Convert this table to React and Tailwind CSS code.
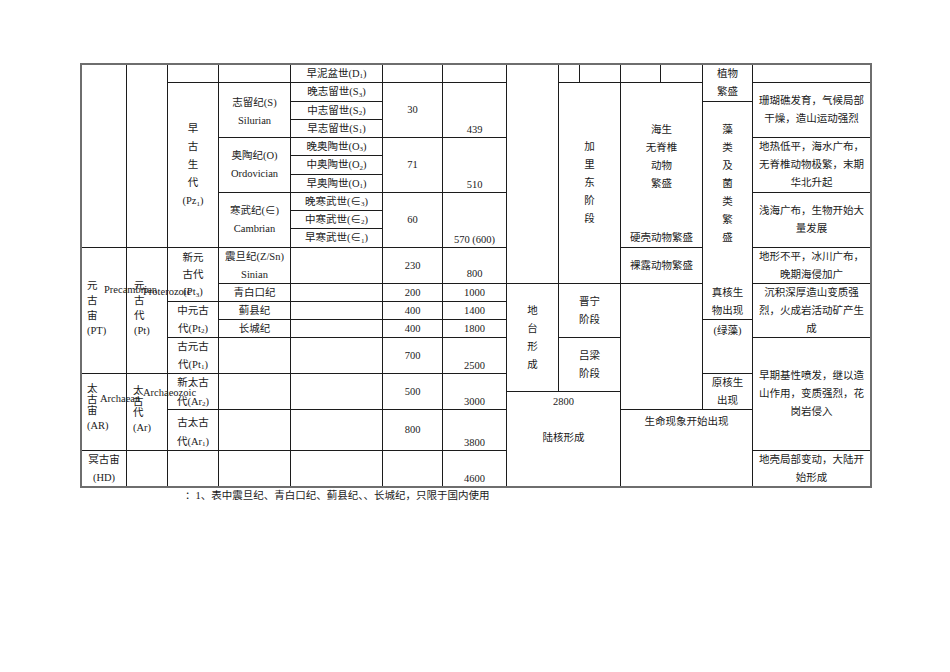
import React from "react";

function Sb({ children }) {
  return <sub className="text-[7px]">{children}</sub>;
}

function Cell({ pos, nb, nr, j = "justify-center", x = "items-center", extra = "", children }) {
  return (
    <div
      className={`${pos} ${nr ? "" : "border-r"} ${nb ? "" : "border-b"} border-[#1c1c1c] flex flex-col ${x} ${j} ${extra} text-center whitespace-nowrap`}
    >
      {children}
    </div>
  );
}

function Ls({ items }) {
  return items.map((t, i) => <div key={i}>{t === "" ? "\u00a0" : t}</div>);
}

export default function App() {
  return (
    <div className="min-h-[672px] w-[950px] bg-white pt-[63px] pl-[80px] text-[#1a1a1a] font-['Liberation_Serif','Noto_Sans_CJK_SC',serif] text-[10.5px] leading-[18px]">
      <div className="relative grid w-[792px] border-2 border-[#6e6e6e] grid-cols-[45px_41px_51px_72px_92px_60px_64px_52px_21px_41px_40px_42px_50px_117px] grid-rows-[18px_19px_18px_18px_18px_19px_18px_18px_18px_19px_36px_18px_18px_18px_36px_18px_18px_41px_35px]">
        {/* Column 1 */}
        <Cell pos="col-start-1 col-end-2 row-start-1 row-end-11" />
        <Cell pos="col-start-1 col-end-2 row-start-11 row-end-16" x="items-start" extra="pl-[5px] pb-[6px] leading-[15px]">
          <Ls items={["元", "古", "宙", "(PT)"]} />
        </Cell>
        <Cell pos="col-start-1 col-end-2 row-start-16 row-end-19" x="items-start" j="justify-start" extra="pl-[5px] pt-[9px] leading-[11px]">
          <div>太</div>
          <div>古</div>
          <div>宙</div>
          <div className="mt-[4px]">(AR)</div>
        </Cell>
        <Cell pos="col-start-1 col-end-2 row-start-19 row-end-20" nb>
          <Ls items={["冥古宙", "(HD)"]} />
        </Cell>

        {/* Column 2 */}
        <Cell pos="col-start-2 col-end-3 row-start-1 row-end-11" />
        <Cell pos="col-start-2 col-end-3 row-start-11 row-end-16" x="items-start" extra="pl-[7px] pb-[6px] leading-[15px]">
          <Ls items={["元", "古", "代", "(Pt)"]} />
        </Cell>
        <Cell pos="col-start-2 col-end-3 row-start-16 row-end-19" x="items-start" j="justify-start" extra="pl-[6px] pt-[11px] leading-[11px]">
          <div>太</div>
          <div>古</div>
          <div>代</div>
          <div className="mt-[4px]">(Ar)</div>
        </Cell>
        <Cell pos="col-start-2 col-end-3 row-start-19 row-end-20" nb />

        {/* Column 3 */}
        <Cell pos="col-start-3 col-end-4 row-start-1 row-end-2" />
        <Cell pos="col-start-3 col-end-4 row-start-2 row-end-11">
          <div>早</div>
          <div>古</div>
          <div>生</div>
          <div>代</div>
          <div>(Pz<Sb>1</Sb>)</div>
        </Cell>
        <Cell pos="col-start-3 col-end-4 row-start-11 row-end-13" extra="leading-[17px]">
          <div>新元</div>
          <div>古代</div>
          <div>(Pt<Sb>3</Sb>)</div>
        </Cell>
        <Cell pos="col-start-3 col-end-4 row-start-13 row-end-15">
          <div>中元古</div>
          <div>代(Pt<Sb>2</Sb>)</div>
        </Cell>
        <Cell pos="col-start-3 col-end-4 row-start-15 row-end-16">
          <div>古元古</div>
          <div>代(Pt<Sb>1</Sb>)</div>
        </Cell>
        <Cell pos="col-start-3 col-end-4 row-start-16 row-end-18" extra="leading-[19px]">
          <div>新太古</div>
          <div>代(Ar<Sb>2</Sb>)</div>
        </Cell>
        <Cell pos="col-start-3 col-end-4 row-start-18 row-end-19" extra="leading-[19px] pt-[3px]">
          <div>古太古</div>
          <div>代(Ar<Sb>1</Sb>)</div>
        </Cell>
        <Cell pos="col-start-3 col-end-4 row-start-19 row-end-20" nb />

        {/* Column 4 */}
        <Cell pos="col-start-4 col-end-5 row-start-1 row-end-2" />
        <Cell pos="col-start-4 col-end-5 row-start-2 row-end-5" extra="pt-[4px]">
          <Ls items={["志留纪(S)", "Silurian"]} />
        </Cell>
        <Cell pos="col-start-4 col-end-5 row-start-5 row-end-8">
          <Ls items={["奥陶纪(O)", "Ordovician"]} />
        </Cell>
        <Cell pos="col-start-4 col-end-5 row-start-8 row-end-11">
          <Ls items={["寒武纪(∈)", "Cambrian"]} />
        </Cell>
        <Cell pos="col-start-4 col-end-5 row-start-11 row-end-12">
          <Ls items={["震旦纪(Z/Sn)", "Sinian"]} />
        </Cell>
        <Cell pos="col-start-4 col-end-5 row-start-12 row-end-13">青白口纪</Cell>
        <Cell pos="col-start-4 col-end-5 row-start-13 row-end-14">蓟县纪</Cell>
        <Cell pos="col-start-4 col-end-5 row-start-14 row-end-15">长城纪</Cell>
        <Cell pos="col-start-4 col-end-5 row-start-15 row-end-16" />
        <Cell pos="col-start-4 col-end-5 row-start-16 row-end-18" />
        <Cell pos="col-start-4 col-end-5 row-start-18 row-end-19" />
        <Cell pos="col-start-4 col-end-5 row-start-19 row-end-20" nb />

        {/* Column 5 */}
        <Cell pos="col-start-5 col-end-6 row-start-1 row-end-2"><div>早泥盆世(D<Sb>1</Sb>)</div></Cell>
        <Cell pos="col-start-5 col-end-6 row-start-2 row-end-3"><div>晚志留世(S<Sb>3</Sb>)</div></Cell>
        <Cell pos="col-start-5 col-end-6 row-start-3 row-end-4"><div>中志留世(S<Sb>2</Sb>)</div></Cell>
        <Cell pos="col-start-5 col-end-6 row-start-4 row-end-5"><div>早志留世(S<Sb>1</Sb>)</div></Cell>
        <Cell pos="col-start-5 col-end-6 row-start-5 row-end-6"><div>晚奥陶世(O<Sb>3</Sb>)</div></Cell>
        <Cell pos="col-start-5 col-end-6 row-start-6 row-end-7"><div>中奥陶世(O<Sb>2</Sb>)</div></Cell>
        <Cell pos="col-start-5 col-end-6 row-start-7 row-end-8"><div>早奥陶世(O<Sb>1</Sb>)</div></Cell>
        <Cell pos="col-start-5 col-end-6 row-start-8 row-end-9"><div>晚寒武世(∈<Sb>3</Sb>)</div></Cell>
        <Cell pos="col-start-5 col-end-6 row-start-9 row-end-10"><div>中寒武世(∈<Sb>2</Sb>)</div></Cell>
        <Cell pos="col-start-5 col-end-6 row-start-10 row-end-11"><div>早寒武世(∈<Sb>1</Sb>)</div></Cell>
        <Cell pos="col-start-5 col-end-6 row-start-11 row-end-12" />
        <Cell pos="col-start-5 col-end-6 row-start-12 row-end-13" />
        <Cell pos="col-start-5 col-end-6 row-start-13 row-end-14" />
        <Cell pos="col-start-5 col-end-6 row-start-14 row-end-15" />
        <Cell pos="col-start-5 col-end-6 row-start-15 row-end-16" />
        <Cell pos="col-start-5 col-end-6 row-start-16 row-end-18" />
        <Cell pos="col-start-5 col-end-6 row-start-18 row-end-19" />
        <Cell pos="col-start-5 col-end-6 row-start-19 row-end-20" nb />

        {/* Column 6 */}
        <Cell pos="col-start-6 col-end-7 row-start-1 row-end-2" />
        <Cell pos="col-start-6 col-end-7 row-start-2 row-end-5">30</Cell>
        <Cell pos="col-start-6 col-end-7 row-start-5 row-end-8">71</Cell>
        <Cell pos="col-start-6 col-end-7 row-start-8 row-end-11">60</Cell>
        <Cell pos="col-start-6 col-end-7 row-start-11 row-end-12">230</Cell>
        <Cell pos="col-start-6 col-end-7 row-start-12 row-end-13">200</Cell>
        <Cell pos="col-start-6 col-end-7 row-start-13 row-end-14">400</Cell>
        <Cell pos="col-start-6 col-end-7 row-start-14 row-end-15">400</Cell>
        <Cell pos="col-start-6 col-end-7 row-start-15 row-end-16">700</Cell>
        <Cell pos="col-start-6 col-end-7 row-start-16 row-end-18">500</Cell>
        <Cell pos="col-start-6 col-end-7 row-start-18 row-end-19">800</Cell>
        <Cell pos="col-start-6 col-end-7 row-start-19 row-end-20" nb />

        {/* Column 7 */}
        <Cell pos="col-start-7 col-end-8 row-start-1 row-end-2" />
        <Cell pos="col-start-7 col-end-8 row-start-2 row-end-5" j="justify-end" extra="leading-[14px]">439</Cell>
        <Cell pos="col-start-7 col-end-8 row-start-5 row-end-8" j="justify-end" extra="leading-[14px]">510</Cell>
        <Cell pos="col-start-7 col-end-8 row-start-8 row-end-11" j="justify-end" extra="leading-[14px]">570 (600)</Cell>
        <Cell pos="col-start-7 col-end-8 row-start-11 row-end-12" j="justify-end" extra="leading-[14px] pb-[2px]">800</Cell>
        <Cell pos="col-start-7 col-end-8 row-start-12 row-end-13">1000</Cell>
        <Cell pos="col-start-7 col-end-8 row-start-13 row-end-14">1400</Cell>
        <Cell pos="col-start-7 col-end-8 row-start-14 row-end-15">1800</Cell>
        <Cell pos="col-start-7 col-end-8 row-start-15 row-end-16" j="justify-end" extra="leading-[14px]">2500</Cell>
        <Cell pos="col-start-7 col-end-8 row-start-16 row-end-18" j="justify-end" extra="leading-[14px]">3000</Cell>
        <Cell pos="col-start-7 col-end-8 row-start-18 row-end-19" j="justify-end" extra="leading-[14px]">3800</Cell>
        <Cell pos="col-start-7 col-end-8 row-start-19 row-end-20" nb j="justify-end" extra="leading-[14px]">4600</Cell>

        {/* Column 8 */}
        <Cell pos="col-start-8 col-end-9 row-start-1 row-end-12" />
        <Cell pos="col-start-8 col-end-9 row-start-12 row-end-17">
          <Ls items={["地", "台", "形", "成"]} />
        </Cell>
        <Cell pos="col-start-8 col-end-11 row-start-17 row-end-20" nb j="justify-start" extra="pt-[1px]">
          <Ls items={["2800", "", "陆核形成"]} />
        </Cell>

        {/* Columns 9-10 */}
        <Cell pos="col-start-9 col-end-10 row-start-1 row-end-2" />
        <Cell pos="col-start-10 col-end-11 row-start-1 row-end-2" />
        <Cell pos="col-start-9 col-end-11 row-start-2 row-end-12">
          <Ls items={["加", "里", "东", "阶", "段"]} />
        </Cell>
        <Cell pos="col-start-9 col-end-11 row-start-12 row-end-15">
          <Ls items={["晋宁", "阶段"]} />
        </Cell>
        <Cell pos="col-start-9 col-end-11 row-start-15 row-end-17">
          <Ls items={["吕梁", "阶段"]} />
        </Cell>

        {/* Columns 11-12 */}
        <Cell pos="col-start-11 col-end-12 row-start-1 row-end-2" />
        <Cell pos="col-start-12 col-end-13 row-start-1 row-end-2" />
        <Cell pos="col-start-11 col-end-13 row-start-2 row-end-11" j="justify-end">
          <Ls items={["海生", "无脊椎", "动物", "繁盛", "", "", "硬壳动物繁盛"]} />
        </Cell>
        <Cell pos="col-start-11 col-end-13 row-start-11 row-end-12">裸露动物繁盛</Cell>
        <Cell pos="col-start-11 col-end-13 row-start-12 row-end-18" />
        <Cell pos="col-start-11 col-end-14 row-start-18 row-end-20" nb j="justify-start" extra="pt-[3px]">
          生命现象开始出现
        </Cell>

        {/* Column 13 */}
        <Cell pos="col-start-13 col-end-14 row-start-1 row-end-3">
          <Ls items={["植物", "繁盛"]} />
        </Cell>
        <Cell pos="col-start-13 col-end-14 row-start-3 row-end-12" nb j="justify-start" extra="pt-[19px]">
          <Ls items={["藻", "类", "及", "菌", "类", "繁", "盛"]} />
        </Cell>
        <Cell pos="col-start-13 col-end-14 row-start-12 row-end-14">
          <Ls items={["真核生", "物出现"]} />
        </Cell>
        <Cell pos="col-start-13 col-end-14 row-start-14 row-end-16" j="justify-start" extra="pt-[2px]">
          (绿藻)
        </Cell>
        <Cell pos="col-start-13 col-end-14 row-start-16 row-end-18">
          <Ls items={["原核生", "出现"]} />
        </Cell>

        {/* Column 14 */}
        <Cell pos="col-start-14 col-end-15 row-start-1 row-end-2" nr />
        <Cell pos="col-start-14 col-end-15 row-start-2 row-end-5" nr>
          <Ls items={["珊瑚礁发育，气候局部", "干燥，造山运动强烈"]} />
        </Cell>
        <Cell pos="col-start-14 col-end-15 row-start-5 row-end-8" nr>
          <Ls items={["地热低平，海水广布，", "无脊椎动物极繁，末期", "华北升起"]} />
        </Cell>
        <Cell pos="col-start-14 col-end-15 row-start-8 row-end-11" nr>
          <Ls items={["浅海广布，生物开始大", "量发展"]} />
        </Cell>
        <Cell pos="col-start-14 col-end-15 row-start-11 row-end-12" nr>
          <Ls items={["地形不平，冰川广布，", "晚期海侵加广"]} />
        </Cell>
        <Cell pos="col-start-14 col-end-15 row-start-12 row-end-15" nr>
          <Ls items={["沉积深厚造山变质强", "烈，火成岩活动矿产生", "成"]} />
        </Cell>
        <Cell pos="col-start-14 col-end-15 row-start-15 row-end-19" nr>
          <Ls items={["早期基性喷发，继以造", "山作用，变质强烈，花", "岗岩侵入"]} />
        </Cell>
        <Cell pos="col-start-14 col-end-15 row-start-19 row-end-20" nr nb>
          <Ls items={["地壳局部变动，大陆开", "始形成"]} />
        </Cell>

        {/* Overlapping English labels */}
        <div className="absolute left-[22px] top-[219px] leading-[12px] whitespace-nowrap">Precambrian</div>
        <div className="absolute left-[61px] top-[221px] leading-[12px] whitespace-nowrap">Proterozoic</div>
        <div className="absolute left-[18px] top-[328px] leading-[12px] whitespace-nowrap">Archaean</div>
        <div className="absolute left-[61px] top-[322px] leading-[12px] whitespace-nowrap">Archaeozoic</div>
      </div>
      <div className="mt-[1px] pl-[105px] leading-[14px] whitespace-nowrap">
        ：1、表中震旦纪、青白口纪、蓟县纪、、长城纪，只限于国内使用
      </div>
    </div>
  );
}
